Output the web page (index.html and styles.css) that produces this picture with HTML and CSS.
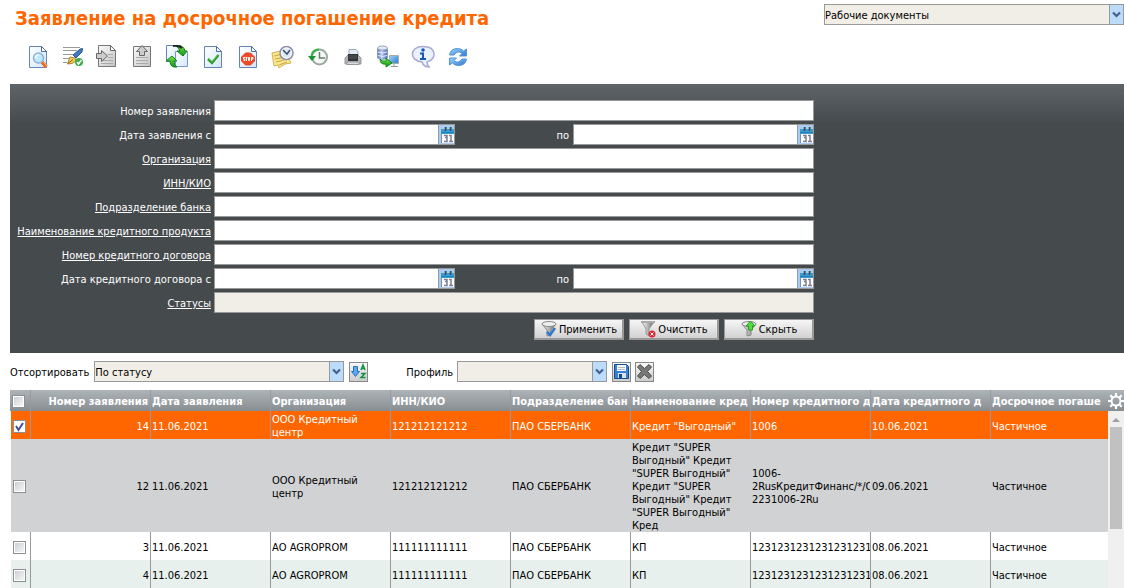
FILE: index.html
```html
<!DOCTYPE html>
<html lang="ru">
<head>
<meta charset="utf-8">
<title>Заявление на досрочное погашение кредита</title>
<link rel="stylesheet" href="styles.css">
</head>
<body>
<svg class="defs" width="0" height="0" aria-hidden="true">
  <defs>
    <linearGradient id="paper" x1="0" y1="0" x2="1" y2="1"><stop offset="0" stop-color="#fff"/><stop offset="1" stop-color="#d3e6fb"/></linearGradient>
    <linearGradient id="greyPaper" x1="0" y1="0" x2="1" y2="1"><stop offset="0" stop-color="#fafafa"/><stop offset="1" stop-color="#c4c4c4"/></linearGradient>
    <linearGradient id="steel" x1="0" y1="0" x2="1" y2="0"><stop offset="0" stop-color="#fff"/><stop offset="1" stop-color="#666"/></linearGradient>
    <linearGradient id="green" x1="0" y1="0" x2="0" y2="1"><stop offset="0" stop-color="#7be04a"/><stop offset="1" stop-color="#0c9a10"/></linearGradient>
    <linearGradient id="blue" x1="0" y1="0" x2="1" y2="1"><stop offset="0" stop-color="#9ad4fd"/><stop offset="1" stop-color="#2f78cc"/></linearGradient>
    <linearGradient id="disk" x1="0" y1="0" x2="1" y2="0"><stop offset="0" stop-color="#4a66b8"/><stop offset=".4" stop-color="#c3d2f2"/><stop offset="1" stop-color="#4661a8"/></linearGradient>
    <symbol id="page" viewBox="0 0 24 24"><path d="M3.500 1.500h12l5 5v16h-17z" fill="url(#paper)" stroke="#6683b5"/><path d="M15.500 1.500v5h5z" fill="#fff" stroke="#4c6ca3"/></symbol>
    <symbol id="calendar" viewBox="0 0 15 19"><path d="M0 0h15v19H0z" fill="#a8ccf4"/><path d="M2 4h13v5H2z" fill="#3c9cc8"/><path d="M3 9h12v9H3z" fill="#fff"/><path d="M2.500 9v9" stroke="#7590b5"/><path d="M2 7.500h13" stroke="#1a80c4"/><path d="M6.500 2v4m5-4v4" stroke="#4b3b68" stroke-width="1.500"/><path d="M7.500 2v2m5-2v2" stroke="#3b9b62"/><path d="M5 10.500h3v2H6m2 0v4H5m5-6h2v6m-2 0h4" fill="none" stroke="#7c7c92" stroke-width="1.500"/></symbol>
    <symbol id="funnel" viewBox="0 0 18 18"><path d="M2 4l5 6v6l4-1v-5l5-6z" fill="url(#steel)" stroke="#888"/><ellipse cx="9" cy="4" rx="7" ry="2.500" fill="#eee" stroke="#888"/></symbol>
    <symbol id="chevron" viewBox="0 0 9 7"><path d="M1 1.500l3.500 3.500 3.500-3.500" fill="none" stroke="#45608c" stroke-width="2.200"/></symbol>
  </defs>
</svg>

<div class="page">
  <header class="header">
    <h1 class="title">Заявление на досрочное погашение кредита</h1>
    <div class="combo combo-scope">
      <select class="combo-select" aria-label="Раздел"><option>Рабочие документы</option></select>
      <span class="combo-arrow"><svg width="9" height="7"><use href="#chevron"/></svg></span>
    </div>
  </header>

  <nav class="toolbar" aria-label="Действия">
    <button class="tool" aria-label="Просмотр"><svg class="icon" viewBox="0 0 24 24"><use href="#page"/><path d="M16 17l4.500 5" stroke="#e8682c" stroke-width="3.500"/><path d="M17 16.500l4 4.500" stroke="#fbc08a"/><circle cx="12.500" cy="13" r="5" fill="#bfe9ff" stroke="#8fb2d3" stroke-width="1.500"/><path d="M9.500 13a3 3 0 0 1 3-3" fill="none" stroke="#fff" stroke-width="1.500"/></svg></button>
    <button class="tool" aria-label="Подписать"><svg class="icon" viewBox="0 0 24 24"><path d="M2 2.500h17M2 5.500h14M2 9.500h10M2 13.500h6M2 17.500h4" stroke="#999"/><path d="M12 10l7-6 2.500-.500-.500 3.500-6 6z" fill="#3f78bd" stroke="#355f96"/><path d="M6.500 19l2.500-7 5 1 1 3-4 2.500z" fill="#f5cf5c" stroke="#b08428"/><path d="M7 18.500l5-4" stroke="#856018"/><circle cx="18" cy="17" r="4" fill="#3dac4b"/><path d="M16 17l1.500 2 3-4" fill="none" stroke="#fff" stroke-width="1.500"/></svg></button>
    <button class="tool" aria-label="Импорт"><svg class="icon" viewBox="0 0 24 24"><path d="M2.500.500h12l5 5v16h-17z" fill="url(#greyPaper)" stroke="#777"/><path d="M14.500.500v5h5z" fill="#fff" stroke="#666"/><path d="M12 9.500h5M12 12.500h5M5 15.500h12M5 18.500h12" stroke="#aaa"/><path d="M.500 8.500h5v-3l6 5.500-6 5.500v-3h-5z" fill="#ccc" stroke="#666"/></svg></button>
    <button class="tool" aria-label="Экспорт"><svg class="icon" viewBox="0 0 24 24"><path d="M2.500 1.500h17v20h-17z" fill="url(#greyPaper)" stroke="#777"/><path d="M5 12.500h12M5 15.500h12M5 18.500h12" stroke="#aaa"/><path d="M8.500 10.500v-4h-3L11 .500l5.500 6h-3v4z" fill="#ccc" stroke="#666"/></svg></button>
    <button class="tool" aria-label="Обмен"><svg class="icon" viewBox="0 0 24 24"><path d="M.500.500h9l4 4v12h-13z" fill="url(#paper)" stroke="#6683b5"/><path d="M9.500 6.500h12v15h-12z" fill="url(#paper)" stroke="#7a98c6"/><path d="M9 0h3q6 1 7 6h2l-4 5-6-5h3q-1-4-5-6z" fill="url(#green)" stroke="#0c7a18"/><path d="M7 1q5-1 9 2" fill="none" stroke="#222" stroke-width="2"/><path d="M0 16l6-5 5 5H8q0 4 3 6-7 1-7-6z" fill="url(#green)" stroke="#108a20"/></svg></button>
    <button class="tool" aria-label="Проверить"><svg class="icon" viewBox="0 0 24 24"><use href="#page"/><path d="M7 14l4 4 6.500-8" fill="none" stroke="#2f9a2f" stroke-width="2.500"/><path d="M7.500 13.500l3.500 3 6-7" fill="none" stroke="#6cca58"/></svg></button>
    <button class="tool" aria-label="Отозвать"><svg class="icon" viewBox="0 0 24 24"><use href="#page"/><path d="M9.500 8h5l4 4v4l-4 4h-5l-4-4v-4z" fill="#ef4a26" stroke="#d8492c"/><path d="M9 12.500H7.500v1.500H9v1.500H7.500m2-3h2m-1 0V16m2-3.500h1v3h-1zm3 3.500v-3.500H17V14h-1.500" fill="none" stroke="#fff"/></svg></button>
    <button class="tool" aria-label="История"><svg class="icon" viewBox="0 0 24 24"><path d="M1 8l13-3 6 13-6 1-6 4-1-3-4 1z" fill="#fbe68a" stroke="#d3b257"/><path d="M3 11l9-2M4 14l11-2M5 17l12-3M8 20l8-3" stroke="#c2a550"/><circle cx="15.500" cy="8" r="6.500" fill="#dceaf6" stroke="#8d90a8" stroke-width="1.500"/><circle cx="15.500" cy="8" r="5" fill="none" stroke="#fff"/><path d="M12 5l4 4 3-4" fill="none" stroke="#3a5270" stroke-width="1.500"/></svg></button>
    <button class="tool" aria-label="Восстановить"><svg class="icon" viewBox="0 0 24 24"><circle cx="13.500" cy="12" r="7.500" fill="#f5f8f5" stroke="#9aaaa0" stroke-width="2"/><path d="M13.500 7v6H19" fill="none" stroke="#6c7a74" stroke-width="1.500"/><path d="M13 4.500q-7 0-7.500 7" fill="none" stroke="#37b449" stroke-width="2"/><path d="M2 11h8l-4 5z" fill="#179430"/></svg></button>
    <button class="tool" aria-label="Печать"><svg class="icon" viewBox="0 0 24 24"><path d="M8 4.500h7l2 2V11H8z" fill="#e4edf6" stroke="#9ba8b5"/><path d="M4 13l3-3h10l3 3v6H4z" fill="#b4b4b4" stroke="#999"/><path d="M7 9h10v7H7z" fill="#30343b"/><path d="M8 11h8M8 13h8" stroke="#5a5a5a"/><path d="M6 17h12v2.500H6z" fill="#ddd" stroke="#999"/></svg></button>
    <button class="tool" aria-label="Отправить"><svg class="icon" viewBox="0 0 24 24"><path d="M1.500 3v10q5 3 10 0V3" fill="url(#disk)" stroke="#8c9dc4"/><ellipse cx="6.500" cy="3" rx="5" ry="2" fill="#e6e9f2" stroke="#98a5c5"/><path d="M2 7q5 2 9 0M2 10.500q5 2 9 0" fill="none" stroke="#e4ecff"/><path d="M13.500 10.500h9v8h-9z" fill="url(#blue)" stroke="#aaa"/><path d="M18 19v2m-3 .500h7" stroke="#999"/><path d="M4 14q1 3 6 2v-3l6 5-6 4v-3q-6 1-6-5z" fill="url(#green)" stroke="#108a20"/></svg></button>
    <button class="tool" aria-label="Информация"><svg class="icon" viewBox="0 0 24 24"><path d="M12 1.500c14 0 14 13 4 15.500 0 3 1 4 2 5-4 0-6-2-7-5C-2 16-2 1.500 12 1.500z" fill="#eaf1ff" stroke="#a9aace" stroke-width="1.500"/><circle cx="12" cy="5" r="1.800" fill="#1956b9"/><path d="M9 8.500h3v5.500m-3 0h6" fill="none" stroke="#1956b9" stroke-width="2"/></svg></button>
    <button class="tool" aria-label="Обновить"><svg class="icon" viewBox="0 0 24 24"><path d="M3.500 10q1-6.500 8-6.500 4 0 6 2.500l3-2v7h-7l2.500-2.500q-4-4-8 1.500z" fill="url(#blue)" stroke="#5594d8"/><path d="M20.500 14q-1 6.500-8 6.500-4 0-6-2.500l-3 2v-7h7L8 15.500q4 4 8-1.500z" fill="url(#blue)" stroke="#5594d8"/></svg></button>
  </nav>

  <form class="filter">
    <div class="row"><label class="label" for="num">Номер заявления</label><div class="field"><input class="text" id="num" type="text"></div></div>
    <div class="row"><label class="label" for="d1">Дата заявления с</label><div class="field">
      <div class="date"><input class="text" id="d1" type="text"><button class="cal" type="button" aria-label="Календарь"><svg width="15" height="19"><use href="#calendar"/></svg></button></div>
      <label class="to" for="d2">по</label>
      <div class="date"><input class="text" id="d2" type="text"><button class="cal" type="button" aria-label="Календарь"><svg width="15" height="19"><use href="#calendar"/></svg></button></div></div></div>
    <div class="row"><div class="label"><a class="lookup" id="l-org" href="#">Организация</a></div><div class="field"><input class="text" type="text" aria-labelledby="l-org"></div></div>
    <div class="row"><div class="label"><a class="lookup" id="l-inn" href="#">ИНН/КИО</a></div><div class="field"><input class="text" type="text" aria-labelledby="l-inn"></div></div>
    <div class="row"><div class="label"><a class="lookup" id="l-unit" href="#">Подразделение банка</a></div><div class="field"><input class="text" type="text" aria-labelledby="l-unit"></div></div>
    <div class="row"><div class="label"><a class="lookup" id="l-prod" href="#">Наименование кредитного продукта</a></div><div class="field"><input class="text" type="text" aria-labelledby="l-prod"></div></div>
    <div class="row"><div class="label"><a class="lookup" id="l-contract" href="#">Номер кредитного договора</a></div><div class="field"><input class="text" type="text" aria-labelledby="l-contract"></div></div>
    <div class="row"><label class="label" for="d3">Дата кредитного договора с</label><div class="field">
      <div class="date"><input class="text" id="d3" type="text"><button class="cal" type="button" aria-label="Календарь"><svg width="15" height="19"><use href="#calendar"/></svg></button></div>
      <label class="to" for="d4">по</label>
      <div class="date"><input class="text" id="d4" type="text"><button class="cal" type="button" aria-label="Календарь"><svg width="15" height="19"><use href="#calendar"/></svg></button></div></div></div>
    <div class="row"><div class="label"><a class="lookup" id="l-status" href="#">Статусы</a></div><div class="field"><input class="text readonly" type="text" readonly aria-labelledby="l-status"></div></div>
    <div class="row"><span class="label"></span><div class="actions">
      <button class="btn" type="button"><svg width="18" height="18" viewBox="0 0 18 18"><use href="#funnel"/><path d="M7 12l3 3 5-7" fill="none" stroke="#2f78cc" stroke-width="2.500"/></svg>Применить</button>
      <button class="btn" type="button"><svg width="18" height="18" viewBox="0 0 18 18"><path d="M3 2h12l-5 7v7l-3-2V9z" fill="url(#steel)" stroke="#999"/><path d="M2 2h14" stroke="#aaa" stroke-width="2"/><circle cx="13" cy="14" r="3.500" fill="#d92832"/><path d="M11.500 12.500l3 3m0-3l-3 3" stroke="#fff"/></svg>Очистить</button>
      <button class="btn" type="button"><svg width="18" height="18" viewBox="0 0 18 18"><use href="#funnel"/><path d="M8.500 10V6H6l4.500-5L15 6h-2.500v4z" fill="#4fdc3c" stroke="#2a9a24"/></svg>Скрыть</button>
    </div></div>
  </form>

  <div class="sortbar">
    <label class="sort-label" for="sort">Отсортировать</label>
    <div class="combo combo-sort">
      <select class="combo-select" id="sort"><option>По статусу</option></select>
      <span class="combo-arrow"><svg width="9" height="7"><use href="#chevron"/></svg></span>
    </div>
    <button class="square" aria-label="Направление сортировки"><svg width="17" height="17" viewBox="0 0 17 17"><path d="M3.500 3.500h4v5h2l-4 5-4-5h2z" fill="#5aa8f2" stroke="#2c6fc0"/><path d="M11 7l2-5 2 5m-3.500-1.500h3M11 10.500h4l-4 4h4.500" fill="none" stroke="#119241" stroke-width="1.500"/></svg></button>
    <label class="profile-label" for="profile">Профиль</label>
    <div class="combo combo-profile">
      <select class="combo-select" id="profile"><option></option></select>
      <span class="combo-arrow"><svg width="9" height="7"><use href="#chevron"/></svg></span>
    </div>
    <button class="square" aria-label="Сохранить"><svg width="17" height="17" viewBox="0 0 17 17"><path d="M1.500 1.500h12l2 2v12h-14z" fill="#3882d3" stroke="#154d92"/><path d="M4 2h9v6H4z" fill="#f5f8ff"/><path d="M5 4.500h7M5 6.500h7" stroke="#bbb"/><path d="M5 10h8v5H5z" fill="#dce2e8"/><path d="M6 11h3v4H6z" fill="#154d92"/></svg></button>
    <button class="square" aria-label="Удалить"><svg width="17" height="17" viewBox="0 0 17 17"><path d="M4 1.500l4.500 4 4.500-4L15.500 4l-4 4.500 4 4.500-2.500 2.500-4.500-4-4.500 4L1.500 13l4-4.500-4-4.500z" fill="#777" stroke="#4a4a4a"/></svg></button>
  </div>

  <section class="listing">
    <table class="grid">
      <colgroup><col class="c-check"><col class="c"><col class="c"><col class="c"><col class="c"><col class="c"><col class="c"><col class="c"><col class="c"><col></colgroup>
      <thead><tr><th><input class="check" type="checkbox" aria-label="Выбрать все"></th><th class="num">Номер заявления</th><th>Дата заявления</th><th>Организация</th><th>ИНН/КИО</th><th>Подразделение бан</th><th>Наименование кред</th><th>Номер кредитного д</th><th>Дата кредитного д</th><th>Досрочное погаше</th></tr></thead>
      <tbody>
        <tr class="selected"><td><input class="check" type="checkbox" checked aria-label="Заявление 14"></td><td class="num">14</td><td>11.06.2021</td><td>ООО Кредитный центр</td><td>121212121212</td><td>ПАО СБЕРБАНК</td><td>Кредит "Выгодный"</td><td>1006</td><td>10.06.2021</td><td>Частичное</td></tr>
        <tr class="draft"><td><input class="check" type="checkbox" aria-label="Заявление 12"></td><td class="num">12</td><td>11.06.2021</td><td>ООО Кредитный центр</td><td>121212121212</td><td>ПАО СБЕРБАНК</td><td>Кредит "SUPER Выгодный" Кредит "SUPER Выгодный" Кредит "SUPER Выгодный" Кредит "SUPER Выгодный" Кред</td><td class="clip">1006-<br>2RusКредитФинанс/*/О<br>2231006-2Ru</td><td>09.06.2021</td><td>Частичное</td></tr>
        <tr><td><input class="check" type="checkbox" aria-label="Заявление 3"></td><td class="num">3</td><td>11.06.2021</td><td>АО AGROPROM</td><td>111111111111</td><td>ПАО СБЕРБАНК</td><td>КП</td><td class="clip">12312312312312312312</td><td>08.06.2021</td><td>Частичное</td></tr>
        <tr class="even"><td><input class="check" type="checkbox" aria-label="Заявление 4"></td><td class="num">4</td><td>11.06.2021</td><td>АО AGROPROM</td><td>111111111111</td><td>ПАО СБЕРБАНК</td><td>КП</td><td class="clip">12312312312312312312</td><td>08.06.2021</td><td>Частичное</td></tr>
      </tbody>
    </table>
    <div class="side">
      <button class="gear" aria-label="Настройка столбцов"><svg width="16" height="16" viewBox="0 0 16 16"><circle cx="8" cy="8" r="4.500" fill="none" stroke="#fff" stroke-width="2"/><path d="M8 0v3M8 13v3M0 8h3M13 8h3M2.300 2.300l2.200 2.200M11.500 11.500l2.200 2.200M13.700 2.300l-2.200 2.200M4.500 11.500l-2.200 2.200" stroke="#fff" stroke-width="2.200"/></svg></button>
      <div class="scroll"><svg class="scroll-up" width="8" height="4" viewBox="0 0 8 4"><path d="M0 4l4-4 4 4z" fill="#a0a0a0"/></svg><div class="thumb"></div></div>
    </div>
  </section>
</div>
</body>
</html>
```
FILE: styles.css
```css
* { box-sizing: border-box; }
body { margin: 0; background: #fff; color: #000; }
body, button, input, select { font: 11px/13px "DejaVu Sans Condensed", "DejaVu Sans", sans-serif; }
button { padding: 0; border: 0; background: none; }
svg { display: block; flex: none; }
.defs { position: absolute; }
.page { padding-left: 10px; }

.header { display: flex; justify-content: space-between; align-items: flex-start; padding: 4px 0 0 5px; }
.title { margin: 0; padding-top: 2px; font-size: 20px; line-height: 24px; font-weight: bold; color: #f60; white-space: nowrap; }

.combo { display: flex; height: 21px; border: 1px solid #999; background: #f1eee7; }
.combo-select { flex: 1; min-width: 0; padding: 2px 0 0; border: 0; background: none; color: #000; appearance: none; }
.combo-arrow { display: grid; place-items: center; width: 14px; border-left: 1px solid #999; background: #bcdcfc; pointer-events: none; }
.combo-scope { width: 300px; }
.combo-sort { width: 250px; }
.combo-profile { width: 150px; }

.toolbar { display: flex; padding: 15px 0 15px 10px; }
.tool { display: grid; place-items: center; width: 35px; height: 24px; }
.icon { width: 24px; height: 24px; }

.filter { display: grid; gap: 3px; padding: 16px 0 13px; background: #454a4d linear-gradient(#5e6468, #454a4d) no-repeat 0 0 / 100% 40px; color: #fff; }
.row { display: flex; align-items: center; gap: 3px; }
.label { flex: 0 0 201px; padding-top: 2px; text-align: right; white-space: nowrap; }
.lookup { color: #fff; }
.field { display: flex; align-items: center; flex: 0 1 600px; }
.text { flex: 1; min-width: 0; height: 21px; padding: 0 2px; border: 1px solid #999; border-radius: 0; background: #fff; }
.readonly { background: #f1eee7; }
.date { display: flex; flex: 0 1 241px; }
.cal { height: 21px; border: solid #999; border-width: 1px 1px 1px 0; }
.to { flex: 1; padding: 2px 4px 0 0; text-align: right; }
.actions { display: flex; justify-content: flex-end; flex: 0 1 600px; gap: 5px; padding-top: 3px; }
.btn { display: flex; align-items: center; justify-content: center; gap: 1px; width: 90px; height: 21px; border: 1px solid #999; border-right-width: 2px; border-bottom-width: 2px; background: linear-gradient(#f6f6f6, #d2d2d2); color: #000; }

.sortbar { display: flex; align-items: center; gap: 5px; padding: 8px 0; }
.sort-label, .profile-label { padding-top: 2px; }
.square { display: grid; place-items: center; width: 19px; height: 20px; border: 1px solid #888; background: linear-gradient(#f8f8f8, #ccc); }
.square + .square { margin-left: -1px; }
.profile-label { padding-left: 33px; margin-right: -1px; }

.listing { display: grid; grid-template-columns: 1fr 16px; }
.grid { width: 100%; table-layout: fixed; border-collapse: separate; border-spacing: 0; }
.c-check { width: 21px; }
.c { width: 120px; }
.grid th { height: 21px; padding: 1px 1px 0; border-right: 1px solid #989b9e; overflow: hidden; white-space: nowrap; background: linear-gradient(#adb4b8, #888d91); color: #fff; font-weight: bold; text-align: left; }
.grid td { height: 28px; padding: 2px 0 0 1px; border-right: 1px solid #999; overflow: hidden; }
.grid td:first-child { border-left: 1px solid #fff; }
.grid th:last-child, .grid td:last-child { border-right: 0; }
.grid td.num { padding-right: 1px; }
.grid th.num { padding-right: 2px; }
.grid .num { text-align: right; }
.clip { white-space: nowrap; }
.selected { background: #f60; color: #fff; }
.draft { background: #d1d2d4; }
.grid .draft td { border-right-color: #d1d2d4; }
.even { background: #e8f0ed; }
.check { display: block; appearance: none; width: 13px; height: 13px; margin: 0 0 0 1px; border: 1px solid #8e8f8f; background: linear-gradient(135deg, #cbcfd5, #f6f6f6) content-box, #fff; padding: 1px; }
.check:checked { background: #fff url("data:image/svg+xml,%3Csvg xmlns='http://www.w3.org/2000/svg' viewBox='0 0 11 11'%3E%3Cpath d='M2 5l2.500 4L9 2' fill='none' stroke='%233f4f96' stroke-width='2'/%3E%3C/svg%3E") center / 11px; }

.side { display: flex; flex-direction: column; }
.gear { display: grid; place-items: center; height: 21px; background: linear-gradient(#adb4b8, #888d91); }
.scroll { flex: 1; padding-top: 7px; background: #f0f0f0; }
.scroll-up { margin: 0 auto 5px; }
.thumb { height: 102px; margin: 0 2px; background: #c1c1c1; }
```
